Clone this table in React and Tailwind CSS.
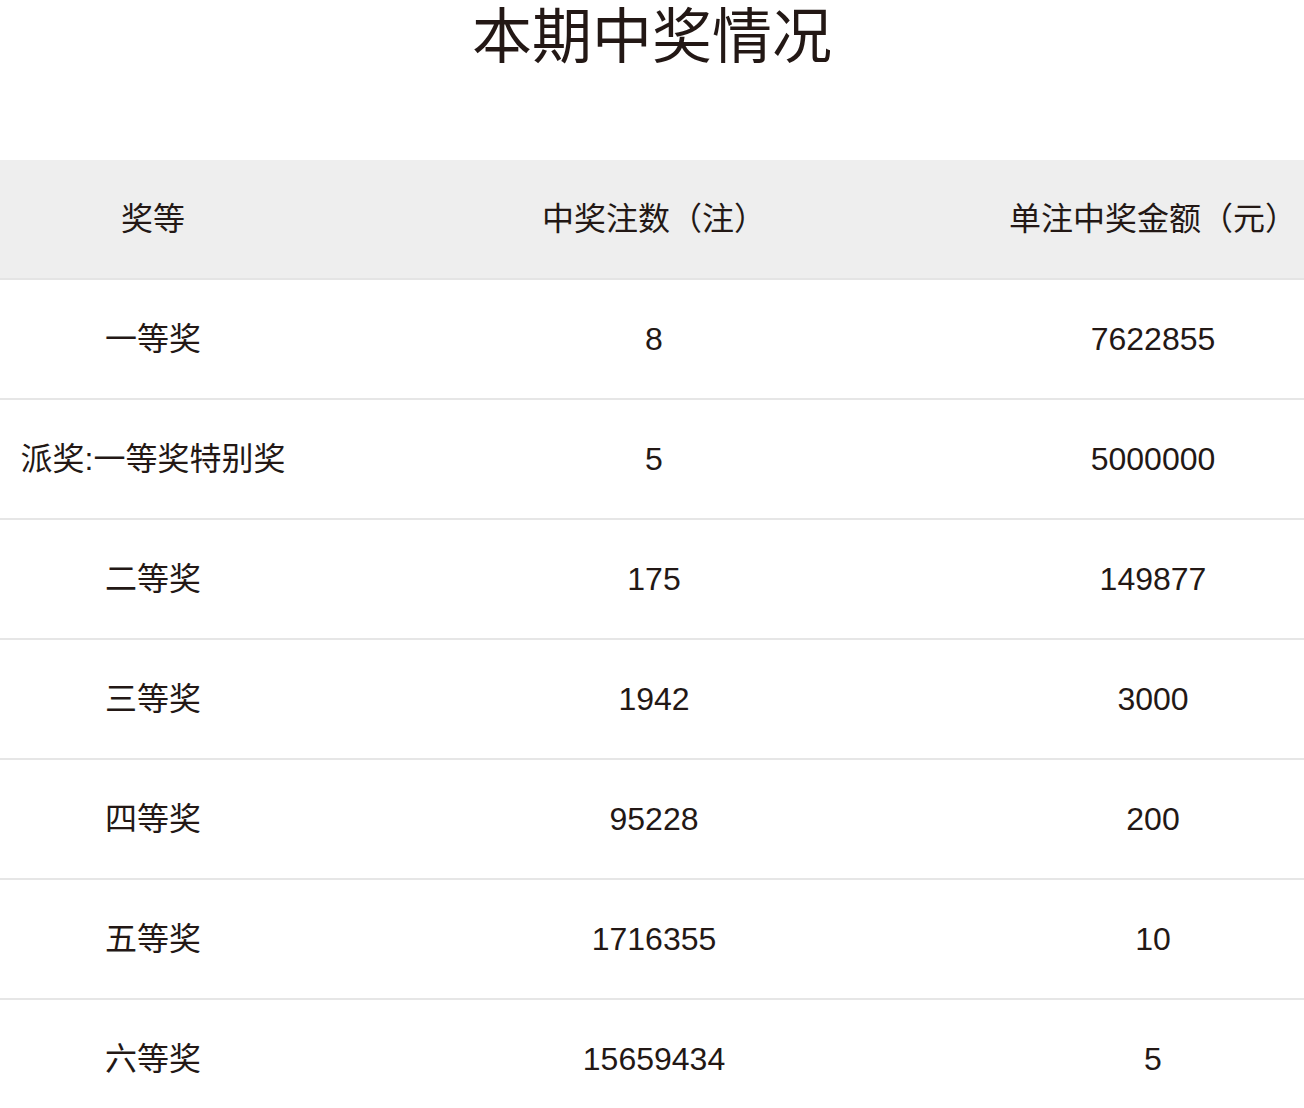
const rows = [
  ["一等奖", "8", "7622855"],
  ["派奖:一等奖特别奖", "5", "5000000"],
  ["二等奖", "175", "149877"],
  ["三等奖", "1942", "3000"],
  ["四等奖", "95228", "200"],
  ["五等奖", "1716355", "10"],
  ["六等奖", "15659434", "5"],
];

export default function App() {
  return (
    <div className="min-h-screen bg-white text-[#231815] font-['Liberation_Sans','Noto_Sans_CJK_SC',sans-serif]">
      <h1 className="pt-[3px] text-center text-[60px] leading-[70px] font-normal">本期中奖情况</h1>
      <div className="mt-[87px]">
        <div className="grid grid-cols-[306px_696px_1fr] h-[120px] items-center bg-[#eeeeee] border-b-2 border-[#e4e4e4] text-[32px] text-center">
          <div>奖等</div>
          <div>中奖注数（注）</div>
          <div>单注中奖金额（元）</div>
        </div>
        {rows.map((r) => (
          <div
            key={r[0]}
            className="grid grid-cols-[306px_696px_1fr] h-[120px] items-center border-b-2 border-[#e6e6e6] text-[32px] text-center"
          >
            <div>{r[0]}</div>
            <div>{r[1]}</div>
            <div>{r[2]}</div>
          </div>
        ))}
      </div>
    </div>
  );
}
